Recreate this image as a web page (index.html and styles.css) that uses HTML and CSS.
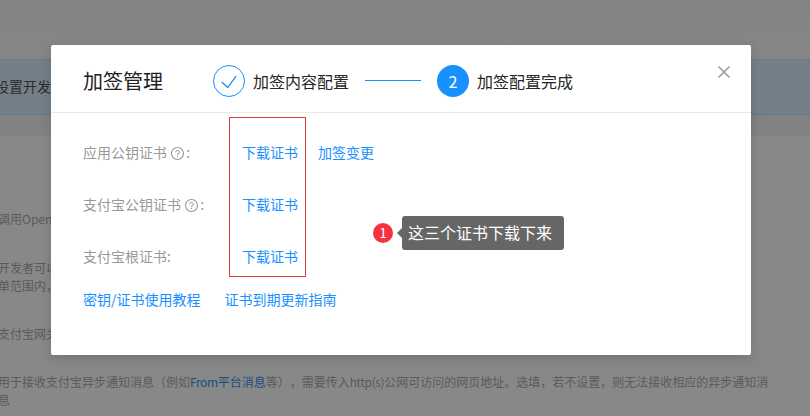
FILE: index.html
```html
<!DOCTYPE html>
<html lang="zh-CN">
<head>
<meta charset="utf-8">
<title>加签管理</title>
<link rel="stylesheet" href="styles.css">
</head>
<body>
<main class="page">
  <div class="alert">设置开发者信息</div>
  <p class="para p-open">调用OpenAPI</p>
  <p class="para p-dev">开发者可以设置应用的安全信息，并在接口加签内容的范围内调用相应的API，未在此配置的应用将无法调用对应的接口能力清单名<br>单范围内，</p>
  <p class="para p-gate">支付宝网关</p>
  <p class="para p-notify">用于接收支付宝异步通知消息（例如<a class="bg-link"><span class="latin">From</span>平台消息</a>等），需要传入<span class="latin">http(s)</span>公网可访问的网页地址。选填，若不设置，则无法接收相应的异步通知消息</p>
</main>

<section class="modal">
  <header class="modal-head">
    <h2 class="modal-title">加签管理</h2>
    <ol class="steps">
      <li class="step">
        <span class="step-dot step-done">
          <svg class="check" viewBox="0 0 16 16" aria-hidden="true"><path d="M.7 9 6.8 14.6 15 3.2"/></svg>
        </span>
        <span class="step-name">加签内容配置</span>
      </li>
      <li class="step-line"></li>
      <li class="step">
        <span class="step-dot step-now">2</span>
        <span class="step-name">加签配置完成</span>
      </li>
    </ol>
    <svg class="close" viewBox="0 0 12 12" aria-hidden="true"><path d="M.5.5l11 11M11.5.5l-11 11"/></svg>
  </header>
  <div class="modal-body">
    <div class="row">
      <span class="label">应用公钥证书
        <svg class="help" viewBox="64 64 896 896" aria-hidden="true"><path d="M512 64C264.6 64 64 264.6 64 512s200.6 448 448 448 448-200.6 448-448S759.4 64 512 64zm0 820c-205.4 0-372-166.6-372-372s166.6-372 372-372 372 166.6 372 372-166.6 372-372 372z"/><path d="M623.6 316.7C593.6 290.4 554 276 512 276s-81.6 14.5-111.6 40.7C369.2 344 352 380.7 352 420v7.6c0 4.4 3.6 8 8 8h48c4.4 0 8-3.6 8-8V420c0-44.1 43.1-80 96-80s96 35.9 96 80c0 31.1-22 59.6-56.1 72.7-21.2 8.1-39.2 22.3-52.1 40.9-13.1 19-19.9 41.8-19.9 64.9V620c0 4.4 3.6 8 8 8h48c4.4 0 8-3.6 8-8v-22.7a48.3 48.3 0 0 1 30.9-44.8c59-22.7 97.1-74.7 97.1-132.5.1-39.3-17.1-76-48.3-103.3z"/><path d="M472 732a40 40 0 1 0 80 0 40 40 0 1 0-80 0z"/></svg>:</span>
      <span class="links"><a class="link">下载证书</a><a class="link">加签变更</a></span>
    </div>
    <div class="row">
      <span class="label">支付宝公钥证书
        <svg class="help" viewBox="64 64 896 896" aria-hidden="true"><path d="M512 64C264.6 64 64 264.6 64 512s200.6 448 448 448 448-200.6 448-448S759.4 64 512 64zm0 820c-205.4 0-372-166.6-372-372s166.6-372 372-372 372 166.6 372 372-166.6 372-372 372z"/><path d="M623.6 316.7C593.6 290.4 554 276 512 276s-81.6 14.5-111.6 40.7C369.2 344 352 380.7 352 420v7.6c0 4.4 3.6 8 8 8h48c4.4 0 8-3.6 8-8V420c0-44.1 43.1-80 96-80s96 35.9 96 80c0 31.1-22 59.6-56.1 72.7-21.2 8.1-39.2 22.3-52.1 40.9-13.1 19-19.9 41.8-19.9 64.9V620c0 4.4 3.6 8 8 8h48c4.4 0 8-3.6 8-8v-22.7a48.3 48.3 0 0 1 30.9-44.8c59-22.7 97.1-74.7 97.1-132.5.1-39.3-17.1-76-48.3-103.3z"/><path d="M472 732a40 40 0 1 0 80 0 40 40 0 1 0-80 0z"/></svg>:</span>
      <span class="links"><a class="link">下载证书</a></span>
    </div>
    <div class="row">
      <span class="label">支付宝根证书:</span>
      <span class="links"><a class="link">下载证书</a></span>
    </div>
    <div class="guides"><a class="link">密钥/证书使用教程</a><a class="link">证书到期更新指南</a></div>
  </div>
  <div class="mark-box"></div>
  <div class="note">
    <span class="note-num">1</span>
    <span class="note-tip">这三个证书下载下来</span>
  </div>
</section>
</body>
</html>
```
FILE: styles.css
```css
* { box-sizing: border-box; }
html, body { margin: 0; height: 100%; }
body {
  background: #888;
  overflow: hidden;
  font-family: "Noto Sans CJK SC", "Noto Sans", sans-serif;
  font-size: 14px;
  color: #5a5a5a;
  text-spacing-trim: space-all;
}
.page {
  height: 416px;
  overflow: hidden;
  padding-top: 59px;
  background: linear-gradient(#848484 0, #868686 59px, #828282 114px, #828282 135px, #888 136px);
}
.alert {
  height: 56px;
  padding-left: 0;
  margin-left: -5px;
  line-height: 53px;
  font-size: 14px;
  color: #2c2c2c;
  white-space: nowrap;
  background: #747f88;
  border-top: 1px solid #5c7c9c;
  border-bottom: 1px solid #5c7c9c;
}
.para {
  margin: 0 0 0 -2px;
  font-size: 12px;
  line-height: 18px;
  white-space: nowrap;
}
.p-open { margin-top: 95px; }
.p-dev { margin-top: 31px; }
.p-gate { margin-top: 30px; }
.p-notify { margin-top: 30px; white-space: normal; width: 776px; }
.latin { letter-spacing: -.4px; }
.bg-link { color: #1a4c82; }

.modal {
  position: absolute;
  left: 51px;
  top: 45px;
  width: 700px;
  height: 310px;
  background: #fff;
  border-radius: 2px;
  box-shadow: 0 4px 12px rgba(0, 0, 0, .15);
}
.modal-head {
  position: relative;
  display: flex;
  align-items: center;
  gap: 50px;
  height: 68px;
  padding: 4px 32px 0;
  border-bottom: 1px solid #e8e8e8;
}
.modal-title {
  margin: 0;
  font-size: 20px;
  font-weight: 400;
  line-height: 28px;
  color: #222;
}
.steps {
  display: flex;
  align-items: center;
  gap: 16px;
  margin: 0;
  padding: 0;
  list-style: none;
}
.step { display: flex; align-items: center; gap: 8px; }
.step-dot {
  display: flex;
  align-items: center;
  justify-content: center;
  width: 32px;
  height: 32px;
  border-radius: 50%;
  font-size: 16px;
}
.step-done { border: 1px solid #1890ff; }
.step-now { background: #1890ff; color: #fff; }
.check {
  width: 16px;
  height: 16px;
  fill: none;
  stroke: #1890ff;
  stroke-width: 1.3;
}
.step-name { font-size: 16px; line-height: 24px; color: #262626; }
.step-line { width: 56px; height: 1px; background: #1890ff; }
.close {
  position: absolute;
  left: 667px;
  top: 21px;
  width: 12px;
  height: 12px;
  fill: none;
  stroke: #999;
  stroke-width: 1.5;
}
.modal-body { padding: 14px 32px 0; }
.row {
  display: grid;
  grid-template-columns: 159px auto;
  align-items: center;
  height: 52px;
  padding-bottom: 2px;
}
.label { color: #999; line-height: 20px; white-space: nowrap; }
.help {
  width: 13px;
  height: 13px;
  margin: 0 2px 0 1px;
  vertical-align: -2px;
  fill: #999;
}
.links { display: flex; gap: 20px; }
.link { color: #1890ff; line-height: 20px; }
.guides { display: flex; gap: 24px; margin-top: 6px; }
.mark-box {
  position: absolute;
  left: 178px;
  top: 72px;
  width: 77px;
  height: 160px;
  border: 1px solid #e03c3c;
}
.note {
  position: absolute;
  left: 322px;
  top: 171px;
  display: flex;
  align-items: center;
  gap: 9px;
}
.note-num {
  width: 20px;
  height: 20px;
  border-radius: 50%;
  background: #f5333f;
  color: #fff;
  font-size: 13px;
  line-height: 20px;
  text-align: center;
}
.note-tip {
  position: relative;
  height: 34px;
  padding: 0 12px 0 6px;
  border-radius: 3px;
  background: #666;
  color: #fff;
  font-size: 16px;
  line-height: 33px;
  white-space: nowrap;
}
.note-tip::before {
  content: "";
  position: absolute;
  left: -5px;
  top: 12px;
  border-style: solid;
  border-width: 5px 5px 5px 0;
  border-color: transparent #666 transparent transparent;
}
```
